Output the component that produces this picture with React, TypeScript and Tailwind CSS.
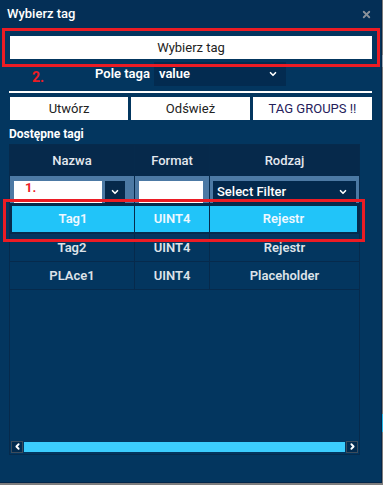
import { ChevronDown, ChevronLeft, ChevronRight, X } from "lucide-react";

const rows = [
  { name: "Tag1", format: "UINT4", kind: "Rejestr", active: true },
  { name: "Tag2", format: "UINT4", kind: "Rejestr", active: false },
  { name: "PLAce1", format: "UINT4", kind: "Placeholder", active: false },
];

function Cell({ w, children, last }: { w: string; children: React.ReactNode; last?: boolean }) {
  return (
    <div
      className={`${w} flex items-center justify-center ${last ? "" : "border-r border-[#062a4c]"}`}
    >
      {children}
    </div>
  );
}

export default function App() {
  return (
    <div
      className="relative w-[383px] h-[485px] bg-[#7d7d7d] overflow-hidden"
      style={{ fontFamily: "Roboto, 'Liberation Sans', sans-serif" }}
    >
      {/* bits of the page behind */}
      <div className="absolute right-0 top-[55px] w-px h-[12px] bg-[#9aa3ad]" />
      <div className="absolute right-0 top-[414px] w-px h-[18px] bg-[#27b9e8]" />

      <div className="w-[382px] h-[483px] bg-[#03365f] border-r border-b border-[#04264a] flex flex-col">
        {/* title bar */}
        <div className="h-[28px] bg-[#042f56] flex items-center justify-between pl-[7px] pr-[9px]">
          <span className="text-white text-[13px] font-medium">Wybierz tag</span>
          <X className="w-[11px] h-[11px] text-[#8b929b]" strokeWidth={4} />
        </div>

        <button className="mt-[8px] ml-[10px] w-[362px] h-[23px] bg-white text-[#222] text-[13px]">
          Wybierz tag
        </button>

        <div className="mt-[3px] flex items-center justify-center gap-[4px]">
          <span className="text-white text-[13px] font-semibold">Pole taga</span>
          <div className="w-[132px] h-[24px] bg-[#032b50] flex items-center justify-between pl-[5px] pr-[8px]">
            <span className="text-white text-[13px] font-semibold">value</span>
            <ChevronDown className="w-[10px] h-[10px] text-white" strokeWidth={4} />
          </div>
        </div>

        <div className="mt-[5px] ml-[9px] w-[363px] h-[2px] bg-white" />

        <div className="mt-[4px] ml-[10px] w-[362px] flex gap-[3px]">
          <button className="w-[118px] h-[23px] bg-white text-[#222] text-[13px]">Utwórz</button>
          <button className="w-[119px] h-[23px] bg-white text-[#222] text-[13px]">Odśwież</button>
          <button className="w-[119px] h-[23px] bg-white text-[#25205a] text-[13px]">TAG GROUPS !!</button>
        </div>

        <div className="mt-[6px] ml-[9px] text-white text-[12px] font-bold leading-[16px]">
          Dostępne tagi
        </div>

        {/* table panel */}
        <div className="mt-[2px] ml-[9px] w-[351px] h-[311px] border border-[#062a4c] flex flex-col">
          <div className="h-[31px] bg-[#06294b] flex text-[#e3e8ee] text-[13px] font-medium">
            <Cell w="w-[125px]">Nazwa</Cell>
            <Cell w="w-[75px]">Format</Cell>
            <Cell w="flex-1" last>Rodzaj</Cell>
          </div>

          <div className="h-[30px] bg-[#4c79a4] flex border-b-[3px] border-[#062a4c]">
            <div className="w-[125px] flex items-start pt-[5px] pl-[4px] gap-[3px] border-r border-[#062a4c]">
              <div className="w-[88px] h-[22px] bg-white" />
              <div className="w-[20px] h-[22px] bg-[#06294b] flex items-center justify-center">
                <ChevronDown className="w-[10px] h-[10px] text-white" strokeWidth={4} />
              </div>
            </div>
            <div className="w-[75px] flex items-start pt-[5px] pl-[4px] border-r border-[#062a4c]">
              <div className="w-[64px] h-[22px] bg-white" />
            </div>
            <div className="flex-1 flex items-start pt-[5px] pl-[3px] pr-[3px]">
              <div className="w-full h-[22px] bg-[#03294d] flex items-center justify-between pl-[4px] pr-[8px]">
                <span className="text-white text-[13px] font-medium">Select Filter</span>
                <ChevronDown className="w-[10px] h-[10px] text-white" strokeWidth={4} />
              </div>
            </div>
          </div>

          {rows.map((r) => (
            <div
              key={r.name}
              className={`h-[28px] flex text-[13px] font-semibold border-b border-[#062a4c] ${
                r.active
                  ? "bg-[#21c4f9] text-[#eef8ff] border-x-2 border-b-2"
                  : "text-[#dde2e8]"
              }`}
            >
              <Cell w={r.active ? "w-[123px]" : "w-[125px]"}>{r.name}</Cell>
              <Cell w="w-[75px]">{r.format}</Cell>
              <Cell w="flex-1" last>{r.kind}</Cell>
            </div>
          ))}

          <div className="flex-1" />

          {/* horizontal scrollbar */}
          <div className="h-[13px] mb-[1px] flex items-center gap-[1px] px-[1px]">
            <div className="w-[12px] h-[12px] border border-[#3d4c5c] bg-[#032b4f] flex items-center justify-center">
              <ChevronLeft className="w-[9px] h-[9px] text-white" strokeWidth={5} />
            </div>
            <div className="flex-1 h-[10px] bg-[#3ccdfd]" />
            <div className="w-[12px] h-[12px] border border-[#3d4c5c] bg-[#032b4f] flex items-center justify-center">
              <ChevronRight className="w-[9px] h-[9px] text-white" strokeWidth={5} />
            </div>
          </div>
        </div>
      </div>

      {/* annotations */}
      <div className="absolute left-[2px] top-[28px] w-[378px] h-[39px] border-[3px] border-[#ec1c24]" />
      <div className="absolute left-[32px] top-[69px] text-[#ec1c24] text-[14px] font-bold leading-[16px]">
        2.
      </div>
      <div className="absolute left-[3px] top-[199px] w-[362px] h-[43px] border-[3px] border-[#ec1c24]" />
      <div className="absolute left-[25px] top-[180px] text-[#ec1c24] text-[13px] font-bold leading-[15px]">
        1.
      </div>
    </div>
  );
}
